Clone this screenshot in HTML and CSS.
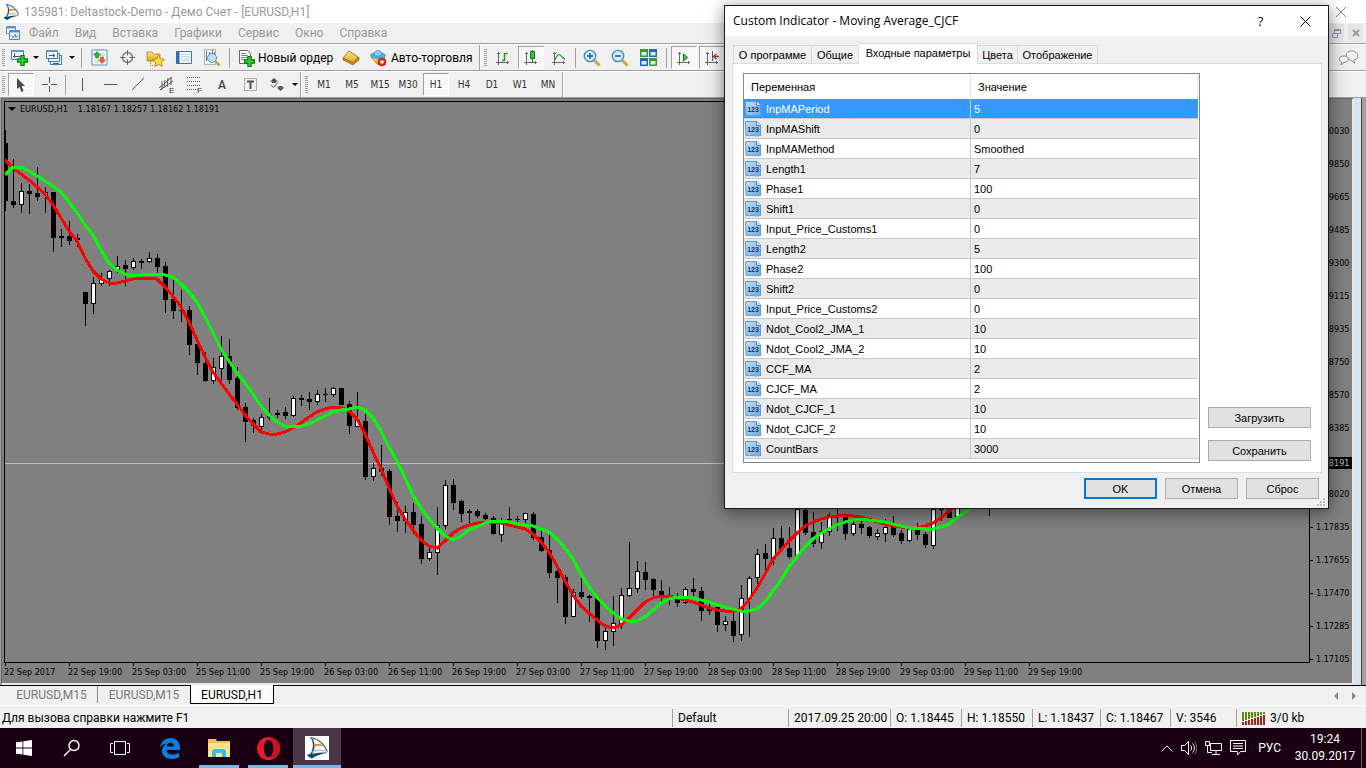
FILE: index.html
```html
<!DOCTYPE html>
<html lang="ru">
<head>
<meta charset="utf-8">
<title>135981: Deltastock-Demo - [EURUSD,H1]</title>
<link rel="stylesheet" href="styles.css">
</head>
<body>
<svg class="defs" aria-hidden="true">
  <defs>
    <linearGradient id="sheet" x1="0" y1="0" x2="1" y2="1"><stop offset="0" stop-color="#c4e0f8"/><stop offset="1" stop-color="#6fa8dc"/></linearGradient>
    <linearGradient id="gold" x1="0" y1="0" x2="0" y2="1"><stop offset="0" stop-color="#ffe98a"/><stop offset="1" stop-color="#d9a320"/></linearGradient>
    <symbol id="num" viewBox="0 0 16 16">
      <path d="M.5.5h11.500l3.500 3.500v11l-1-1-1 1.500-1.500-2-1.500 2-1.500-1.500-2 1-1-1-1.500 1-1.500-1-2 1z" fill="url(#sheet)" stroke="#5f9bd0"/>
      <path d="M11.500.5v4h4" fill="#dceefc" stroke="#4f86b8"/>
      <text x="8" y="11" text-anchor="middle" class="num-text">123</text>
    </symbol>
    <symbol id="logo" viewBox="0 0 24 24">
      <path d="M5 1C13 2 20 7 23 16l-1.500-.5C18.500 8 13 4 7 2.500z" fill="#3a6f90"/>
      <path d="M5 1C9 6 9 13 4.500 19.500l2-.8C11 13 10.500 6 6.500 1.500z" fill="#134b70"/>
      <path d="M9 8.500c3-1 6-1 8.500.5l1.500 1.800c-3-1.300-6-1.300-10 .2z" fill="#ee8b22"/>
      <path d="M8 14.500c4-1.300 8-1.300 12.500-.3l1 1.200c-5-.9-9-.6-14.500.8z" fill="#9cc3da"/>
      <path d="M2 18.500c7-.5 14-3 21-1.500-6 .5-11 2-16 5.500C5 22 3 20.500 2 18.500z" fill="#134b70"/>
    </symbol>
    <symbol id="plus" viewBox="0 0 10 10"><path d="M3.500.5h3v3h3v3h-3v3h-3v-3h-3v-3h3z" fill="#2fd22f" stroke="#0a7a0a"/></symbol>
    <symbol id="axes" viewBox="0 0 16 16"><path d="M3.500 2v13M1 12.500h13M2 3.500h3M12.500 11v3" fill="none" stroke="#666"/></symbol>
  </defs>
</svg>

<header class="titlebar">
  <svg class="i18" viewBox="0 0 24 24"><use href="#logo"/></svg>
  <h1 class="title">135981: Deltastock-Demo - Демо Счет - [EURUSD,H1]</h1>
  <button class="win-close" aria-label="Закрыть"><svg width="10" height="10" viewBox="0 0 10 10"><path d="M0 0l10 10M10 0L0 10" stroke="#888" fill="none"/></svg></button>
</header>

<nav class="menubar">
  <svg width="16" height="16" viewBox="0 0 16 16"><path d="M1.500 1.500h9v7h-9z" fill="#fff" stroke="#5b8fd0"/><path d="M1 2.500h10" stroke="#5b8fd0" stroke-width="2"/><path d="M4.500 5.500h10v9h-10z" fill="#fff" stroke="#4a80c8"/><path d="M4 6.500h11" stroke="#5b8fd0" stroke-width="2"/><path d="M6 10l2 3 2-4 1 4 2-3" fill="none" stroke="#4a80c8"/></svg>
  <a href="#">Файл</a><a href="#">Вид</a><a href="#">Вставка</a><a href="#">Графики</a><a href="#">Сервис</a><a href="#">Окно</a><a href="#">Справка</a>
  <span class="grow"></span>
  <button class="mdi-btn" aria-label="Развернуть"><svg width="9" height="9" viewBox="0 0 9 9"><path d="M2.500 1.500h6v3h-6zM.5 4.500h5v4h-5z" fill="#e6ebf0" stroke="#8a9db0"/><path d="M2 1h7" stroke="#8a9db0" stroke-width="2"/></svg></button>
  <button class="mdi-btn" aria-label="Закрыть окно"><svg width="8" height="8" viewBox="0 0 8 8"><path d="M1 1l6 6M7 1L1 7" stroke="#8a9db0" stroke-width="2" fill="none"/></svg></button>
</nav>

<div class="toolbar">
  <span class="grip"></span>
  <button class="tool w24" aria-label="Новый график"><svg width="18" height="18" viewBox="0 0 18 18"><path d="M1.500 1.500h12v9h-12z" fill="#f4faff" stroke="#3a7abf"/><path d="M1 2h13" stroke="#5c98d6" stroke-width="2"/><path d="M4.500 4v5M3 7.500h8" stroke="#555"/><use href="#plus" x="7" y="6" width="11" height="11"/></svg></button>
  <button class="tool w10" aria-label="Список"><i class="caret"></i></button>
  <button class="tool w26" aria-label="Профили"><svg width="18" height="18" viewBox="0 0 18 18"><path d="M5.500 6.500h11v9h-11z" fill="#eaf4fd" stroke="#3a7abf"/><path d="M3.500 4.500h11v8h-11z" fill="#eaf4fd" stroke="#3a7abf"/><path d="M1.500 1.500h11v8h-11z" fill="#f4faff" stroke="#3a7abf"/><path d="M1 2h12" stroke="#5c98d6" stroke-width="2"/><path d="M4 6.500h6M8 5l2 1.500L8 8M8 14.500h6" stroke="#555" fill="none"/></svg></button>
  <button class="tool w10" aria-label="Список"><i class="caret"></i></button>
  <span class="sep"></span>
  <button class="tool" aria-label="Обзор рынка"><svg width="17" height="17" viewBox="0 0 17 17"><path d="M1 1h15v15H1z" fill="#fff" stroke="#4d90cf"/><path d="M9 4.500h5M9 6.500h5M3 11.500h4M3 13.500h4" stroke="#ccc"/><path d="M6 2.500L9.500 6H7.500v3h-3V6h-2z" fill="#27b827" stroke="#0c7a0c" stroke-width=".6"/><path d="M11 14.500L7.500 11h2V8h3v3h2z" fill="#f2663a" stroke="#b83010" stroke-width=".6"/></svg></button>
  <button class="tool" aria-label="Окно данных"><svg width="17" height="17" viewBox="0 0 17 17"><circle cx="8.500" cy="8.500" r="5" fill="none" stroke="#777" stroke-width="1.400"/><path d="M8.500 1v5.500M8.500 10.500V16M1 8.500h5.500M10.500 8.500H16" stroke="#666"/></svg></button>
  <button class="tool" aria-label="Навигатор"><svg width="19" height="18" viewBox="0 0 19 18"><path d="M1 3h5l1 2h7v7H1z" fill="url(#gold)" stroke="#c0922a"/><path d="M4.500 12v5M4 16.500h4" stroke="#777" stroke-dasharray="1 1"/><path d="M12.500 6l2 3.800 4 .6-3 2.800.7 4.200-3.700-2-3.700 2 .7-4.200-3-2.800 4-.6z" fill="#ffd84a" stroke="#c08a10"/></svg></button>
  <button class="tool" aria-label="Терминал"><svg width="17" height="17" viewBox="0 0 17 17"><path d="M1.500 2.500h15v12h-15z" fill="#f6fbff" stroke="#2e76bd"/><path d="M3 2v13" stroke="#2c6cb4" stroke-width="3"/><path d="M6 5.500h9M6 7.500h9M6 9.500h9M6 11.500h9" stroke="#bfd6ea"/></svg></button>
  <button class="tool" aria-label="Тестер"><svg width="19" height="18" viewBox="0 0 19 18"><path d="M2.500.5h11v15h-11z" fill="#f5f5f5" stroke="#b0b0b0"/><path d="M4.500 2v10M7.500 3v8M10.500 1v9M12.500 3v6" stroke="#777"/><circle cx="10" cy="9" r="4.500" fill="#bfe0fa" stroke="#4f94cf"/><path d="M13.500 12.500l4 4" stroke="#d6a22a" stroke-width="2.500"/></svg></button>
  <span class="sep"></span>
  <button class="tool wide order"><svg width="17" height="18" viewBox="0 0 17 18"><path d="M1.500 1.500h8l3 3v10h-11z" fill="#fff" stroke="#666"/><path d="M3 4.500h5M3 6.500h7M3 8.500h7M3 10.500h4" stroke="#888"/><use href="#plus" x="6" y="7" width="11" height="11"/></svg>Новый ордер</button>
  <button class="tool" aria-label="MetaEditor"><svg width="18" height="16" viewBox="0 0 18 16"><path d="M1 8l6-7 9 6-5 6z" fill="url(#gold)" stroke="#b07a12"/><path d="M1 8l10 5 6-6v3l-6 5L1 10z" fill="#c98a18" stroke="#8d5d0c" stroke-width=".6"/></svg></button>
  <button class="tool wide auto"><svg width="17" height="18" viewBox="0 0 17 18"><path d="M1 8h14l-3 8-5-1z" fill="url(#gold)" stroke="#c09222"/><ellipse cx="8" cy="6.500" rx="7.500" ry="3" fill="#5aaee0" stroke="#2f7fb4" stroke-width=".7"/><path d="M4 6c0-6 8-6 8 0-2 1.500-6 1.500-8 0z" fill="#8fcdf0" stroke="#2f7fb4" stroke-width=".7"/><circle cx="12" cy="13" r="4" fill="#e02a1c" stroke="#a8140c" stroke-width=".6"/><path d="M10.500 11.500h3v3h-3z" fill="#fff"/></svg>Авто-торговля</button>
  <span class="edge"></span><span class="grip"></span>
  <button class="tool" aria-label="Бары"><svg width="16" height="16" viewBox="0 0 16 16"><use href="#axes" width="16" height="16"/><path d="M9.500 3v8M9.500 3.500h3M7 10.500h3" stroke="#1a9a1a" stroke-width="1.500"/></svg></button>
  <button class="tool pressed" aria-label="Свечи"><svg width="16" height="16" viewBox="0 0 16 16"><use href="#axes" width="16" height="16"/><path d="M9.500 0v12" stroke="#0a7a0a"/><path d="M7.500 1.500h4v7h-4z" fill="#22cc44" stroke="#0a7a0a"/></svg></button>
  <button class="tool" aria-label="Линия"><svg width="16" height="16" viewBox="0 0 16 16"><use href="#axes" width="16" height="16"/><path d="M4 10c2-6 5-7 7-3 1 1 2 2 3 2" fill="none" stroke="#3a9a3a" stroke-width="1.300"/></svg></button>
  <span class="sep thin"></span>
  <button class="tool" aria-label="Увеличить"><svg width="18" height="18" viewBox="0 0 18 18"><path d="M11.500 11.500l5 5" stroke="#d8a62c" stroke-width="3"/><circle cx="7" cy="7" r="5.700" fill="#d8edfc" stroke="#3f86c4" stroke-width="1.300"/><path d="M7 4v6M4 7h6" stroke="#2b72b4" stroke-width="1.800"/></svg></button>
  <button class="tool" aria-label="Уменьшить"><svg width="18" height="18" viewBox="0 0 18 18"><path d="M11.500 11.500l5 5" stroke="#d8a62c" stroke-width="3"/><circle cx="7" cy="7" r="5.700" fill="#d8edfc" stroke="#3f86c4" stroke-width="1.300"/><path d="M4 7h6" stroke="#2b72b4" stroke-width="1.800"/></svg></button>
  <button class="tool" aria-label="Мозаика"><svg width="17" height="17" viewBox="0 0 17 17"><path d="M0 0h8v8H0zM9 9h8v8H9z" fill="#3c9a1e"/><path d="M9 0h8v8H9zM0 9h8v8H0z" fill="#2a62c8"/><path d="M1.500 3h5v3.500h-5zM10.500 3h5v3.500h-5zM1.500 12h5v3.500h-5zM10.500 12h5v3.500h-5z" fill="#dcebf8"/></svg></button>
  <span class="sep"></span>
  <button class="tool pressed" aria-label="Автопрокрутка"><svg width="16" height="16" viewBox="0 0 16 16"><use href="#axes" width="16" height="16"/><path d="M7.500 4l4 3.500-4 3.500z" fill="#3ad03a" stroke="#0a7a0a"/></svg></button>
  <button class="tool pressed" aria-label="Сдвиг"><svg width="16" height="16" viewBox="0 0 16 16"><use href="#axes" width="16" height="16"/><path d="M8.500 1v10" stroke="#2b62a4"/><path d="M15 6.500h-5M12.500 4l-3 2.500 3 2.500" stroke="#c0391c" stroke-width="1.300" fill="none"/></svg></button>
  <span class="grow"></span>
  <button class="chat" aria-label="Чат"><svg width="22" height="16" viewBox="0 0 22 16"><path d="M13.500 1c8 0 8 9 2 9l1 3-4-3c-6-1-6-9 1-9z" fill="#f4f4f4" stroke="#8a8a8a"/><path d="M6 6c6 0 6 6 0 6.500L3 15l.5-3C-.5 10 1 6 6 6z" fill="#f4f4f4" stroke="#8a8a8a"/></svg></button>
</div>

<div class="toolbar">
  <span class="grip"></span>
  <button class="tool pressed" aria-label="Курсор"><svg width="12" height="16" viewBox="0 0 12 16"><path d="M2 1l8 8H6.500l2 5-2 1-2-5L2 12z" fill="#4a4a4a"/></svg></button>
  <button class="tool" aria-label="Перекрестие"><svg width="17" height="17" viewBox="0 0 17 17"><path d="M8.500 1v6M8.500 10v6M1 8.500h6M10 8.500h6" stroke="#555"/></svg></button>
  <span class="sep thin"></span>
  <button class="tool" aria-label="Вертикальная линия"><svg width="15" height="15" viewBox="0 0 15 15"><path d="M7.500 1v13" stroke="#555"/></svg></button>
  <button class="tool" aria-label="Горизонтальная линия"><svg width="15" height="15" viewBox="0 0 15 15"><path d="M1 7.500h13" stroke="#555"/></svg></button>
  <button class="tool" aria-label="Трендовая линия"><svg width="15" height="15" viewBox="0 0 15 15"><path d="M1 13L13 1" stroke="#555" fill="none"/></svg></button>
  <button class="tool" aria-label="Канал"><svg width="17" height="18" viewBox="0 0 17 18"><path d="M1 12L14 1M2 14L15 5M4 5v9M7 4l-1 8M10 2l-1 9M13 1v8" stroke="#555" fill="none"/><text x="11" y="17" class="tiny">E</text></svg></button>
  <button class="tool" aria-label="Фибоначчи"><svg width="17" height="18" viewBox="0 0 17 18"><path d="M1 1.500h14M1 5.500h14M1 9.500h14M1 13.500h9" stroke="#555" stroke-dasharray="1 1"/><text x="11" y="17" class="tiny">F</text></svg></button>
  <button class="tool glyph">A</button>
  <button class="tool" aria-label="Метка"><svg width="15" height="15" viewBox="0 0 15 15"><path d="M1.500 1.500h12v12h-12z" fill="none" stroke="#666" stroke-dasharray="1 1"/><path d="M4 4.500h7M7.500 4v8" stroke="#555" stroke-width="2"/></svg></button>
  <button class="tool w26" aria-label="Стрелки"><svg width="16" height="16" viewBox="0 0 16 16"><path d="M5 1l4 3.500H7V6H3V4.500H1zM11.500 14l-4-3.500h2V9h4v1.500h2z" fill="#555"/><path d="M2 8l2.500 2.500L9 5.500" stroke="#555" fill="none"/></svg></button>
  <button class="tool w10" aria-label="Список"><i class="caret"></i></button>
  <span class="edge"></span><span class="grip"></span>
  <button class="tool tf">M1</button><button class="tool tf">M5</button><button class="tool tf">M15</button><button class="tool tf">M30</button><button class="tool tf pressed">H1</button><button class="tool tf">H4</button><button class="tool tf">D1</button><button class="tool tf">W1</button><button class="tool tf">MN</button>
  <span class="edge"></span>
</div>

<main class="mdi">
  <section class="chart">
    <div class="upper">
      <div class="plot">
        <svg id="candles" width="1304" height="560" viewBox="5 102 1304 560" shape-rendering="crispEdges" role="img" aria-label="EURUSD,H1"></svg>
        <p class="quote"><i class="caret"></i><span>EURUSD,H1</span><span>1.18167 1.18257 1.18162 1.18191</span></p>
      </div>
      <ol class="prices">
        <li>1.20030</li><li>1.19850</li><li>1.19665</li><li>1.19485</li><li>1.19300</li><li>1.19115</li><li>1.18935</li><li>1.18750</li><li>1.18570</li><li>1.18385</li><li class="last"><b>1.18191</b></li><li>1.18020</li><li>1.17835</li><li>1.17655</li><li>1.17470</li><li>1.17285</li><li>1.17105</li>
      </ol>
    </div>
    <ol class="times">
      <li>22 Sep 2017</li><li>22 Sep 19:00</li><li>25 Sep 03:00</li><li>25 Sep 11:00</li><li>25 Sep 19:00</li><li>26 Sep 03:00</li><li>26 Sep 11:00</li><li>26 Sep 19:00</li><li>27 Sep 03:00</li><li>27 Sep 11:00</li><li>27 Sep 19:00</li><li>28 Sep 03:00</li><li>28 Sep 11:00</li><li>28 Sep 19:00</li><li>29 Sep 03:00</li><li>29 Sep 11:00</li><li>29 Sep 19:00</li>
    </ol>
  </section>
  <div class="frame"></div>
</main>

<nav class="tabs">
  <a href="#" class="tab first">EURUSD,M15</a><a href="#" class="tab">EURUSD,M15</a><a href="#" class="tab active">EURUSD,H1</a>
  <span class="grow"></span>
  <button class="scroll" aria-label="Назад"><i class="left"></i></button>
  <button class="scroll" aria-label="Вперёд"><i class="right"></i></button>
</nav>

<footer class="status">
  <span class="grow hint">Для вызова справки нажмите F1</span>
  <span class="cell c116">Default</span>
  <span class="cell c102">2017.09.25 20:00</span>
  <span class="cell c71">O: 1.18445</span>
  <span class="cell c71">H: 1.18550</span>
  <span class="cell c68">L: 1.18437</span>
  <span class="cell c70">C: 1.18467</span>
  <span class="cell c66">V: 3546</span>
  <span class="cell c130"><svg width="24" height="14" viewBox="0 0 24 14" shape-rendering="crispEdges"><path d="M1 1v9M4 1v8M7 1v7M10 1v6M13 1v5M16 1v4M19 1v3M22 1v2" stroke="#5c8a14" stroke-width="2"/><path d="M1 11v3M4 10v4M7 9v5M10 8v6M13 7v7M16 6v8M19 5v9M22 4v10" stroke="#a02414" stroke-width="2"/></svg>3/0 kb</span>
</footer>

<div class="taskbar">
  <button class="task" aria-label="Пуск"><svg width="16" height="16" viewBox="0 0 16 16"><path d="M0 2.300L6.500 1.400V7.600H0zM7.300 1.300L16 0v7.600H7.300zM0 8.400h6.500v6.200L0 13.700zM7.300 8.400H16V16l-8.700-1.300z" fill="#fff"/></svg></button>
  <button class="task" aria-label="Поиск"><svg width="18" height="18" viewBox="0 0 18 18"><circle cx="11" cy="6.500" r="5" fill="none" stroke="#fff" stroke-width="1.400"/><path d="M7.500 10.500L1 17" stroke="#fff" stroke-width="1.500"/></svg></button>
  <button class="task" aria-label="Представление задач"><svg width="20" height="14" viewBox="0 0 20 14"><path d="M4.500.5h11v13h-11zM3 2.500H.5v9H3M17 2.500h2.500v9H17" fill="none" stroke="#fff"/></svg></button>
  <button class="task edgeb" aria-label="Edge"><svg width="20" height="21" viewBox="0 0 20 21"><path d="M0 9.500C1 3.500 5 0 10.500 0 16.500 0 20 4 20 9.500V12H6.500c.3 3.200 3 4.500 6 4.500 2.500 0 4.500-.7 6.500-1.800v4.600C17 20.500 14.500 21 12 21 6 21 2 17.800 2 13c0-3.200 1.700-6 4.700-7.300-2.900.1-5.200 1.500-6.700 3.800zM6.700 8.500h7C13.700 6 12.300 4.800 10.300 4.800 8.300 4.800 7 6.300 6.700 8.500z" fill="#0b7de0"/></svg></button>
  <button class="task open" aria-label="Проводник"><svg width="22" height="18" viewBox="0 0 22 18"><path d="M0 0h8l1 2h13v16H0z" fill="#f0c24c"/><path d="M0 4h22v14H0z" fill="#ffe28a"/><path d="M4 18v-6l2-2h10l2 2v6h-4v-4H8v4z" fill="#2cc0f0"/></svg></button>
  <button class="task open" aria-label="Opera"><svg width="23" height="23" viewBox="0 0 23 23"><ellipse cx="11.500" cy="11.500" rx="11.500" ry="11.500" fill="#e8182e"/><path d="M14 1c6 0 9 6 9 10.500S20 22 14 22z" fill="#c41426"/><ellipse cx="11.500" cy="11.500" rx="4.700" ry="8.700" fill="#1a0013"/></svg></button>
  <button class="task current" aria-label="Deltastock"><span class="tile"><svg width="24" height="24" viewBox="0 0 24 24"><use href="#logo"/></svg></span></button>
  <span class="grow"></span>
  <div class="tray">
    <svg width="12" height="7" viewBox="0 0 12 7"><path d="M.5 6.500L6 1l5.500 5.500" fill="none" stroke="#fff"/></svg>
    <svg width="16" height="14" viewBox="0 0 16 14"><path d="M.5 4.500h3l4-4v13l-4-4h-3z" fill="none" stroke="#fff"/><path d="M9.500 4.500c1.500 1.500 1.500 3.500 0 5M11.500 2.500c2.500 2.500 2.500 6.500 0 9" fill="none" stroke="#fff"/><path d="M13.500 1c3.500 3.500 2.500 9.500 0 12" fill="none" stroke="#8a7a88"/></svg>
    <svg width="17" height="14" viewBox="0 0 17 14"><path d="M5.500 2.500h11v7h-11zM7 13.500h8M11 10v3M.5.5h4v4h-4zM2.500 5v6.500H7" fill="none" stroke="#fff"/></svg>
    <svg width="16" height="16" viewBox="0 0 16 16"><path d="M.5.500h15v11h-5l-3 3.500V11.500h-7zM3 3.500h10M3 6h10M3 8.500h10" fill="none" stroke="#fff"/></svg>
    <span class="lang">РУС</span>
    <span class="clock">19:24<br>30.09.2017</span>
    <span class="desk"></span>
  </div>
</div>

<section class="dialog" role="dialog" aria-labelledby="dlg-title">
  <header class="dlg-head">
    <h2 id="dlg-title">Custom Indicator - Moving Average_CJCF</h2>
    <button class="dlg-x" aria-label="Справка">?</button>
    <button class="dlg-x" aria-label="Закрыть"><svg width="11" height="11" viewBox="0 0 11 11"><path d="M.5.5l10 10M10.500.5l-10 10" stroke="#000" fill="none"/></svg></button>
  </header>
  <div class="dlg-body">
    <div class="dlg-tabs" role="tablist">
      <button role="tab" class="t79">О программе</button><button role="tab" class="t47">Общие</button><button role="tab" class="t119 on" aria-selected="true">Входные параметры</button><button role="tab" class="t40">Цвета</button><button role="tab" class="t80">Отображение</button>
    </div>
    <div class="pane">
      <div class="list">
        <table class="params">
          <thead><tr><th class="name">Переменная</th><th>Значение</th></tr></thead>
          <tbody>
            <tr class="sel"><td><svg><use href="#num"/></svg>InpMAPeriod</td><td>5</td></tr>
            <tr><td><svg><use href="#num"/></svg>InpMAShift</td><td>0</td></tr>
            <tr><td><svg><use href="#num"/></svg>InpMAMethod</td><td>Smoothed</td></tr>
            <tr><td><svg><use href="#num"/></svg>Length1</td><td>7</td></tr>
            <tr><td><svg><use href="#num"/></svg>Phase1</td><td>100</td></tr>
            <tr><td><svg><use href="#num"/></svg>Shift1</td><td>0</td></tr>
            <tr><td><svg><use href="#num"/></svg>Input_Price_Customs1</td><td>0</td></tr>
            <tr><td><svg><use href="#num"/></svg>Length2</td><td>5</td></tr>
            <tr><td><svg><use href="#num"/></svg>Phase2</td><td>100</td></tr>
            <tr><td><svg><use href="#num"/></svg>Shift2</td><td>0</td></tr>
            <tr><td><svg><use href="#num"/></svg>Input_Price_Customs2</td><td>0</td></tr>
            <tr><td><svg><use href="#num"/></svg>Ndot_Cool2_JMA_1</td><td>10</td></tr>
            <tr><td><svg><use href="#num"/></svg>Ndot_Cool2_JMA_2</td><td>10</td></tr>
            <tr><td><svg><use href="#num"/></svg>CCF_MA</td><td>2</td></tr>
            <tr><td><svg><use href="#num"/></svg>CJCF_MA</td><td>2</td></tr>
            <tr><td><svg><use href="#num"/></svg>Ndot_CJCF_1</td><td>10</td></tr>
            <tr><td><svg><use href="#num"/></svg>Ndot_CJCF_2</td><td>10</td></tr>
            <tr><td><svg><use href="#num"/></svg>CountBars</td><td>3000</td></tr>
          </tbody>
        </table>
      </div>
      <div class="side"><button class="btn">Загрузить</button><button class="btn">Сохранить</button></div>
    </div>
    <div class="actions"><button class="btn ok">OK</button><button class="btn">Отмена</button><button class="btn">Сброс</button></div>
    <svg class="resize" width="8" height="8" viewBox="0 0 8 8"><path d="M6 0h2v2H6zM3 3h2v2H3zM6 3h2v2H6zM0 6h2v2H0zM3 6h2v2H3zM6 6h2v2H6z" fill="#bcbcbc"/></svg>
  </div>
</section>
<script src="chart.js"></script>
</body>
</html>
```
FILE: styles.css
```css
* { box-sizing: border-box; }
html, body { height: 100%; }
body {
  margin: 0;
  display: flex;
  flex-direction: column;
  position: relative;
  overflow: hidden;
  background: #f0f0f0;
  color: #000;
  font: 12px/16px Roboto, "Noto Sans", sans-serif;
}
button { margin: 0; padding: 0; border: 0; background: none; color: inherit; font: inherit; }
a { color: inherit; text-decoration: none; }
h1, h2, p, ol { margin: 0; padding: 0; font: inherit; list-style: none; }
svg { display: block; flex: none; }
.defs { position: absolute; width: 0; height: 0; }
.grow { flex: 1; }

.titlebar { display: flex; align-items: center; height: 23px; flex: none; padding: 0 20px 0 2px; background: #fff; color: #999; }
.i18 { width: 18px; height: 18px; }
.title { flex: 1; margin-left: 4px; }

.menubar { display: flex; align-items: center; height: 20px; flex: none; padding: 0 3px 0 5px; color: #999; }
.menubar a { margin-left: 8px; margin-right: 8px; }
.mdi-btn { display: flex; align-items: center; justify-content: center; width: 15px; height: 18px; margin-left: 4px; background: #e6e6e6; }

.toolbar { display: flex; align-items: stretch; height: 27px; flex: none; border-top: 1px solid #a0a0a0; box-shadow: inset 0 1px #fff; padding-top: 1px; }
.grip { width: 3px; margin: 4px 2px 3px; background: repeating-linear-gradient(#a0a0a0 0 1px, #f0f0f0 1px 2px); }
.tool { display: flex; align-items: center; justify-content: center; width: 28px; flex: none; margin: 1px 0; }
.w24 { width: 24px; }
.w26 { width: 26px; }
.w10 { width: 10px; }
.wide { justify-content: flex-start; gap: 3px; padding-left: 5px; }
.order { width: 104px; }
.auto { width: 114px; gap: 4px; }
.pressed { width: 26px; margin: 1px; background: #f8f8f8; border: 1px solid; border-color: #a0a0a0 #fff #fff #a0a0a0; }
.sep { width: 8px; flex: none; background: linear-gradient(#a0a0a0, #a0a0a0) center / 1px 20px no-repeat; }
.sep.thin { width: 5px; }
.edge { width: 5px; flex: none; border-left: 1px solid #a0a0a0; box-shadow: inset 1px 0 #fff; margin-right: -2px; }
.caret { display: block; width: 0; height: 0; border: 3px solid transparent; border-top: 3px solid #000; border-bottom: 0; flex: none; }
.glyph { color: #444; font-weight: 500; font-size: 12px; }
.tf { color: #333; font: 10px/12px "DejaVu Sans Condensed", sans-serif; }
.tiny { font: 8px "Liberation Sans", sans-serif; fill: #333; }
.chat { margin-right: 6px; }

.mdi { display: flex; flex: 1; min-height: 0; border-top: 1px solid #a0a0a0; border-left: 1px solid #a0a0a0; }
.chart { display: flex; flex-direction: column; flex: 1; min-width: 0; background: #808080; border: 1px solid #696969; border-right: 2px solid #e8e8e8; border-bottom: 2px solid #e8e8e8; padding: 2px 0 0 2px; font: 9px/12px "DejaVu Sans Condensed", sans-serif; }
.frame { width: 12px; background: #a0a0a0; border-left: 7px solid #d6e4f2; box-shadow: inset 1px 0 #404040; }
.upper { display: flex; flex: 1; min-height: 0; }
.plot { position: relative; flex: 1; min-width: 0; overflow: hidden; border: 1px solid #000; }
.quote { position: absolute; left: 3px; top: 1px; display: flex; align-items: center; gap: 10px; }
.quote .caret { border-width: 4px 4px 0; margin-right: -6px; }
.prices { width: 42px; flex: none; padding-top: 14px; }
.prices li { height: 33px; padding-left: 6px; line-height: 33px; background: linear-gradient(#000, #000) 0 50% / 3px 1px no-repeat; }
.prices .last { background: none; padding: 12px 0 0 2px; }
.prices b { display: block; height: 12px; padding-left: 4px; background: #000; color: #c0c0c0; font-weight: normal; line-height: 12px; }
.times { display: flex; height: 20px; flex: none; }
.times li { width: 64px; flex: none; padding-top: 3px; white-space: nowrap; background: linear-gradient(#000, #000) 1px 0 / 1px 3px no-repeat; }

.tabs { display: flex; height: 21px; flex: none; border-top: 1px solid #000; border-bottom: 1px solid #fff; padding-left: 2px; font-size: 12px; color: #777; }
.tab { width: 92px; height: 17px; text-align: center; line-height: 18px; }
.tab.first { width: 96px; padding-left: 4px; border-right: 1px solid #888; }
.tab.active { width: 84px; height: 19px; margin-top: -1px; border: 1px solid #000; border-top: 0; background: #fff; color: #000; line-height: 20px; }
.scroll { width: 18px; display: flex; align-items: center; justify-content: center; }
.scroll:last-child { margin-right: 3px; }
.left, .right { border: 4px solid transparent; }
.left { border-right-color: #888; border-left: 0; }
.right { border-left-color: #888; border-right: 0; }

.status { display: flex; align-items: center; height: 22px; flex: none; padding: 2px 0 0 2px; white-space: nowrap; }
.cell { display: flex; align-items: center; gap: 4px; height: 18px; flex: none; padding-left: 5px; border-left: 1px solid #a0a0a0; }
.c116 { width: 116px; }
.c102 { width: 102px; }
.c71 { width: 71px; }
.c68 { width: 68px; }
.c70 { width: 70px; }
.c66 { width: 66px; }
.c130 { width: 130px; }

.taskbar { display: flex; height: 40px; flex: none; background: #1a0013; color: #fff; }
.task { display: flex; align-items: center; justify-content: center; width: 48px; border-bottom: 3px solid transparent; border-top: 3px solid transparent; }
.edgeb { width: 52px; }
.open { width: 40px; margin: 0 6px 0 3px; border-bottom-color: #76b9ed; }
.current { margin-left: -1px; background: #4b3548; border-top-color: #4b3548; border-bottom-color: #76b9ed; }
.tile { background: #fff; }
.tray { display: flex; align-items: center; gap: 8px; }
.lang { margin-left: 4px; }
.clock { width: 72px; text-align: center; line-height: 17px; }
.desk { width: 5px; height: 40px; border-left: 1px solid #6a5866; margin-left: -8px; }

.dialog { position: absolute; top: 5px; right: 37px; width: 605px; border: 1px solid #1a1a1a; background: #f0f0f0; box-shadow: 0 3px 16px rgba(0, 0, 0, .5); font: 11px/14px "Liberation Sans", Arial, sans-serif; }
.dlg-head { display: flex; align-items: center; height: 30px; background: #fff; font: 12px/16px "Open Sans", "Noto Sans", sans-serif; }
.dlg-head h2 { flex: 1; padding-left: 8px; }
.dlg-x { display: flex; align-items: center; justify-content: center; width: 45px; height: 30px; font-size: 13px; }
.dlg-body { position: relative; padding: 7px 6px 9px 7px; }
.dlg-tabs { display: flex; align-items: flex-end; padding-left: 1px; height: 20px; }
.dlg-tabs button { height: 18px; border: 1px solid #d9d9d9; border-bottom: 0; border-left-width: 0; white-space: nowrap; }
.dlg-tabs button:first-child { border-left-width: 1px; }
.dlg-tabs .on { height: 21px; margin-bottom: -1px; background: #fff; position: relative; padding-bottom: 2px; }
.t79 { width: 79px; }
.t47 { width: 47px; }
.t119 { width: 119px; }
.t40 { width: 40px; }
.t80 { width: 80px; }
.pane { display: flex; gap: 8px; padding: 9px 10px; background: #fff; border: 1px solid #dcdcdc; }
.list { flex: 1; padding: 1px 1px 3px 0; border: 1px solid #828790; }
.params { width: 100%; border-spacing: 0; table-layout: fixed; }
.params th { height: 24px; padding: 0 0 0 7px; text-align: left; font-weight: normal; border-right: 1px solid #e5e5e5; }
.params .name { width: 227px; }
.params td { height: 20px; padding: 0 0 0 3px; vertical-align: middle; border-bottom: 1px solid #c8c8c8; line-height: 16px; }
.params td:first-child { border-right: 1px solid #c8c8c8; padding-left: 1px; }
.params td svg { float: left; width: 16px; height: 16px; margin-right: 5px; }
.params tr:nth-child(even) td { background: #eaeaea; }
.params .sel td { background: #39f; color: #fff; }
.num-text { font: bold 7px "Liberation Sans", sans-serif; fill: #0b3a6b; }
.side { display: flex; flex-direction: column; justify-content: flex-end; gap: 12px; width: 103px; padding-bottom: 2px; }
.btn { height: 21px; border: 1px solid #adadad; background: #e1e1e1; }
.actions { display: flex; justify-content: flex-end; gap: 8px; padding: 5px 3px 0 0; }
.actions .btn { width: 73px; }
.ok { border: 2px solid #0078d7; }
.resize { position: absolute; right: 3px; bottom: 2px; }

.black { fill: #000; }
.white { fill: #fff; stroke: #000; }
.wick { stroke: #000; }
.slow { fill: none; stroke: #0f0; stroke-width: 3; }
.fast { fill: none; stroke: #f00; stroke-width: 3; }
.bid { stroke: #c0c0c0; }
```
FILE: chart.js
```js
// One bar per 8px: high, body top, body bottom, low, rising (1) or falling (0)
const bars = [
  [130,143,201,211,0],[159,201,205,208,0],[183,191,205,213,1],[184,191,194,214,0],[167,193,197,201,0],[187,192,195,213,1],[192,192,238,252,0],[229,236,238,247,0],
  [221,236,241,245,0],[234,238,240,247,1],[292,292,304,326,0],[277,283,304,314,1],[273,279,284,286,1],[270,271,279,286,1],[256,266,270,273,1],[260,265,269,286,0],
  [258,261,268,270,1],[259,261,263,269,0],[252,258,262,263,1],[254,258,267,273,0],[262,266,300,313,0],[280,299,311,319,0],[290,310,311,322,0],[306,310,345,355,0],
  [344,344,363,375,0],[352,363,381,382,0],[358,367,381,384,1],[336,356,369,382,1],[339,356,380,384,0],[367,378,408,410,0],[403,407,422,442,0],[418,420,426,433,0],
  [414,417,427,430,1],[398,414,418,420,1],[410,413,415,418,0],[407,412,416,419,0],[396,398,416,417,1],[395,398,400,406,0],[392,399,402,410,0],[390,394,402,405,1],
  [388,394,395,402,0],[387,388,395,397,1],[388,388,405,405,0],[401,404,426,434,0],[392,420,427,427,1],[414,421,477,480,0],[463,468,477,481,1],[445,468,472,476,0],
  [469,471,517,525,0],[502,516,521,532,0],[506,512,521,533,1],[503,512,525,534,0],[516,524,559,564,0],[548,552,559,561,1],[507,525,553,575,1],[480,485,526,529,1],
  [479,485,503,510,0],[500,501,514,522,0],[509,511,513,523,0],[509,511,516,518,0],[513,515,519,520,0],[516,518,534,535,0],[518,523,535,542,1],[507,519,520,525,0],
  [516,519,520,522,0],[513,513,520,523,1],[512,514,538,540,0],[530,537,551,552,0],[535,550,573,578,0],[568,571,578,603,0],[575,577,617,624,0],[589,592,617,617,1],
  [575,592,597,599,0],[595,596,598,622,0],[596,597,641,648,0],[624,631,641,650,1],[596,623,632,646,1],[588,595,624,629,1],[542,588,596,597,1],[561,571,589,593,1],
  [562,572,580,590,0],[578,579,590,596,0],[580,591,596,603,0],[587,596,600,605,0],[593,598,603,607,0],[587,589,603,604,1],[578,589,592,596,0],[587,591,611,621,0],
  [602,609,611,615,0],[606,607,625,632,0],[616,621,625,631,1],[612,621,636,642,0],[585,598,635,641,1],[576,578,599,637,1],[549,554,578,585,1],[544,553,559,570,0],
  [528,538,559,565,1],[526,538,549,551,0],[527,548,557,559,0],[500,509,556,556,1],[500,510,533,535,0],[512,532,544,547,0],[522,531,543,549,1],[513,515,532,536,1],
  [500,515,516,531,0],[515,516,534,540,0],[520,524,534,536,1],[519,524,528,534,0],[526,527,536,538,0],[529,533,537,540,1],[519,527,534,542,1],[516,527,535,537,0],
  [530,533,541,544,0],[529,529,541,542,1],[523,527,535,540,0],[532,534,545,548,0],[500,509,546,549,1],[500,508,510,521,0],[500,500,518,518,0],[500,500,517,517,1],
  [490,495,500,505,0],[490,495,500,505,0],[490,495,500,505,0],[490,495,500,516,0]
];
// Moving averages, one value per bar
const fast = [160,168,174,180,187,194,205,218,231,241,258,271,279,283,283,281,279,278,278,279,287,296,307,322,340,357,372,383,394,404,415,424,432,434,434,432,428,423,417,412,409,407,407,411,419,434,452,469,488,506,519,530,540,546,548,541,533,528,525,523,522,522,523,525,527,529,534,542,552,566,581,595,606,613,620,626,628,625,618,610,602,598,596,596,598,600,602,605,608,610,611,611,609,600,588,574,559,550,541,533,526,522,519,517,516,515,516,517,519,522,524,526,527,528,528,526,523,518,511,503];
const slow = [175,167,167,171,176,181,186,192,202,213,225,235,250,263,270,274,276,275,274,274,275,277,284,292,302,317,333,349,361,373,383,394,406,415,422,426,427,426,424,420,416,412,410,409,407,410,418,431,447,461,478,495,508,519,528,536,540,536,530,527,523,521,521,522,524,525,526,529,532,539,548,559,574,587,597,606,613,619,621,621,617,610,603,599,597,597,598,600,602,605,607,609,611,611,609,602,591,580,567,557,547,539,533,529,525,522,520,519,520,521,522,524,526,528,528,529,529,527,524,518,512,505];

const parts = ['<path class="bid" d="M5 463.5H4000"/>'];
bars.forEach(([high, top, bottom, low, up], i) => {
  const x = 5 + i * 8;
  parts.push(`<path class="wick" d="M${x + 0.5} ${high}V${low}"/>`);
  parts.push(up
    ? `<rect class="white" x="${x - 1.5}" y="${top + 0.5}" width="4" height="${Math.max(bottom - top - 1, 1)}"/>`
    : `<rect class="black" x="${x - 2}" y="${top}" width="5" height="${Math.max(bottom - top, 1)}"/>`);
});
const line = (cls, values) =>
  `<polyline class="${cls}" points="${values.map((y, i) => `${5 + i * 8},${y}`).join(' ')}"/>`;
parts.push(line('fast', fast), line('slow', slow));
document.getElementById('candles').innerHTML = parts.join('');
```
